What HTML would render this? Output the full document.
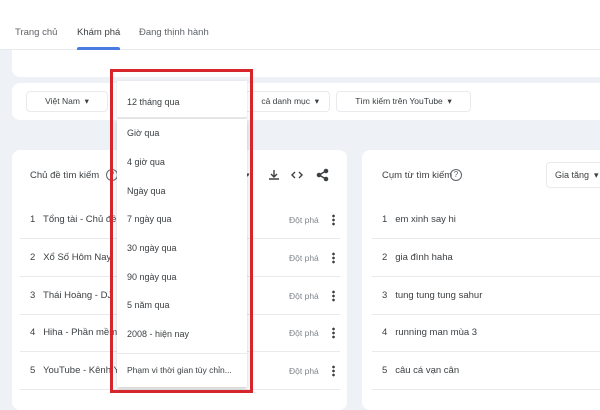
<!DOCTYPE html>
<html><head><meta charset="utf-8"><style>
*{margin:0;padding:0;box-sizing:border-box}
body{width:600px;height:400px;overflow:hidden;background:#eef1f6;font-family:"Liberation Sans",sans-serif;color:#3c4043;position:relative;font-size:9.5px}
.a{position:absolute;white-space:nowrap}
.card{position:absolute;background:#fff;border-radius:8px}
.chip{position:absolute;background:#fff;border:1px solid #e8eaed;border-radius:4px;height:21px;line-height:19px;font-size:8.5px;text-align:center;white-space:nowrap}
.row{position:absolute;left:20px;width:320px;border-bottom:1px solid #e8eaed;height:38px}
.row2{position:absolute;left:372px;width:228px;border-bottom:1px solid #e8eaed;height:38px}
.it{position:absolute;left:127px;font-size:9px;color:#3c4043;white-space:nowrap}
.dp{position:absolute;left:289px;font-size:8.5px;color:#80868b}
.dots{position:absolute;left:332px;width:3px;height:12px;background:radial-gradient(circle,#3c4043 1.2px,transparent 1.5px) 0 0/3px 4px}
.q{position:absolute;width:12px;height:12px;border:1px solid #5f6368;border-radius:50%;font-size:8px;text-align:center;line-height:10px;color:#5f6368}
</style></head><body>
<div class="a" style="left:0;top:0;width:600px;height:50px;background:#fff;border-bottom:1px solid #e8eaed"></div>
<div class="a" style="left:15px;top:27px;font-size:9.5px;color:#5f6368">Trang chủ</div>
<div class="a" style="left:77px;top:27px;font-size:9.5px;color:#3c4043">Khám phá</div>
<div class="a" style="left:77px;top:47px;width:43px;height:3px;background:#4a7be0;border-radius:2px 2px 0 0"></div>
<div class="a" style="left:139px;top:27px;font-size:9.5px;color:#5f6368">Đang thịnh hành</div>
<div class="card" style="left:12px;top:50px;width:600px;height:27px;border-radius:0 0 8px 8px"></div>
<div class="card" style="left:12px;top:83px;width:600px;height:37px"></div>
<div class="chip" style="left:26px;top:91px;width:82px">Việt Nam &nbsp;▾</div>
<div class="chip" style="left:230px;top:91px;width:100px;text-align:right;padding-right:10px">cả danh mục &nbsp;▾</div>
<div class="chip" style="left:336px;top:91px;width:135px">Tìm kiếm trên YouTube &nbsp;▾</div>
<div class="card" style="left:12px;top:150px;width:335px;height:260px"></div>
<div class="card" style="left:362px;top:150px;width:300px;height:260px"></div>
<div class="a" style="left:30px;top:170px;font-size:9.5px">Chủ đề tìm kiếm</div>
<div class="q" style="left:106px;top:169px">?</div>
<div class="a" style="left:246px;top:171px;font-size:7px">▾</div>
<svg class="a" style="left:267px;top:168px" width="70" height="14" viewBox="0 0 70 14" fill="none" stroke="#3c4043" stroke-width="1.4"><path d="M7 2v7M4 6l3 3 3-3M2 11h10"/><path d="M28 4l-3 3 3 3M32 4l3 3-3 3"/><circle cx="59" cy="3" r="1.6" fill="#3c4043"/><circle cx="52" cy="7" r="1.6" fill="#3c4043"/><circle cx="59" cy="11" r="1.6" fill="#3c4043"/><path d="M59 3l-7 4 7 4"/></svg>
<div class="a" style="left:382px;top:170px;font-size:9.5px">Cụm từ tìm kiếm</div>
<div class="q" style="left:450px;top:169px">?</div>
<div class="chip" style="left:546px;top:162px;width:70px;height:26px;line-height:24px;text-align:left;padding-left:8px;font-size:9px">Gia tăng &nbsp;▾</div>
<div class="row" style="top:201px"></div><div class="row" style="top:239px"></div><div class="row" style="top:277px"></div><div class="row" style="top:314px"></div><div class="row" style="top:352px"></div>
<div class="row2" style="top:201px"></div><div class="row2" style="top:239px"></div><div class="row2" style="top:277px"></div><div class="row2" style="top:314px"></div><div class="row2" style="top:352px"></div>
<div class="a" style="left:30px;top:214px">1 &nbsp; Tổng tài - Chủ đề</div>
<div class="a" style="left:30px;top:252px">2 &nbsp; Xổ Số Hôm Nay</div>
<div class="a" style="left:30px;top:290px">3 &nbsp; Thái Hoàng - DJ</div>
<div class="a" style="left:30px;top:327px">4 &nbsp; Hiha - Phần mềm</div>
<div class="a" style="left:30px;top:365px">5 &nbsp; YouTube - Kênh YouTube</div>
<div class="dp" style="top:215px">Đột phá</div><div class="dots" style="top:214px"></div>
<div class="dp" style="top:253px">Đột phá</div><div class="dots" style="top:252px"></div>
<div class="dp" style="top:291px">Đột phá</div><div class="dots" style="top:290px"></div>
<div class="dp" style="top:328px">Đột phá</div><div class="dots" style="top:327px"></div>
<div class="dp" style="top:366px">Đột phá</div><div class="dots" style="top:365px"></div>
<div class="a" style="left:382px;top:214px">1 &nbsp; em xinh say hi</div>
<div class="a" style="left:382px;top:252px">2 &nbsp; gia đình haha</div>
<div class="a" style="left:382px;top:290px">3 &nbsp; tung tung tung sahur</div>
<div class="a" style="left:382px;top:327px">4 &nbsp; running man mùa 3</div>
<div class="a" style="left:382px;top:365px">5 &nbsp; câu cá vạn cân</div>
<div class="a" style="left:117px;top:81px;width:130px;height:37px;background:#fff;border-bottom:1px solid #e8eaed;box-shadow:0 1px 3px rgba(0,0,0,.15)"></div>
<div class="a" style="left:117px;top:119px;width:130px;height:268px;background:#fff;box-shadow:0 2px 4px rgba(0,0,0,.2)"></div>
<div class="a" style="left:117px;top:353px;width:130px;height:1px;background:#e8eaed"></div>
<div class="it" style="top:97px">12 tháng qua</div>
<div class="it" style="top:128px">Giờ qua</div>
<div class="it" style="top:157px">4 giờ qua</div>
<div class="it" style="top:186px">Ngày qua</div>
<div class="it" style="top:214px">7 ngày qua</div>
<div class="it" style="top:243px">30 ngày qua</div>
<div class="it" style="top:272px">90 ngày qua</div>
<div class="it" style="top:300px">5 năm qua</div>
<div class="it" style="top:329px">2008 - hiện nay</div>
<div class="it" style="top:365px;font-size:8.5px">Phạm vi thời gian tùy chỉn...</div>
<div class="a" style="left:110px;top:69px;width:143px;height:324px;border:3px solid #d6262b"></div>
</body></html>
